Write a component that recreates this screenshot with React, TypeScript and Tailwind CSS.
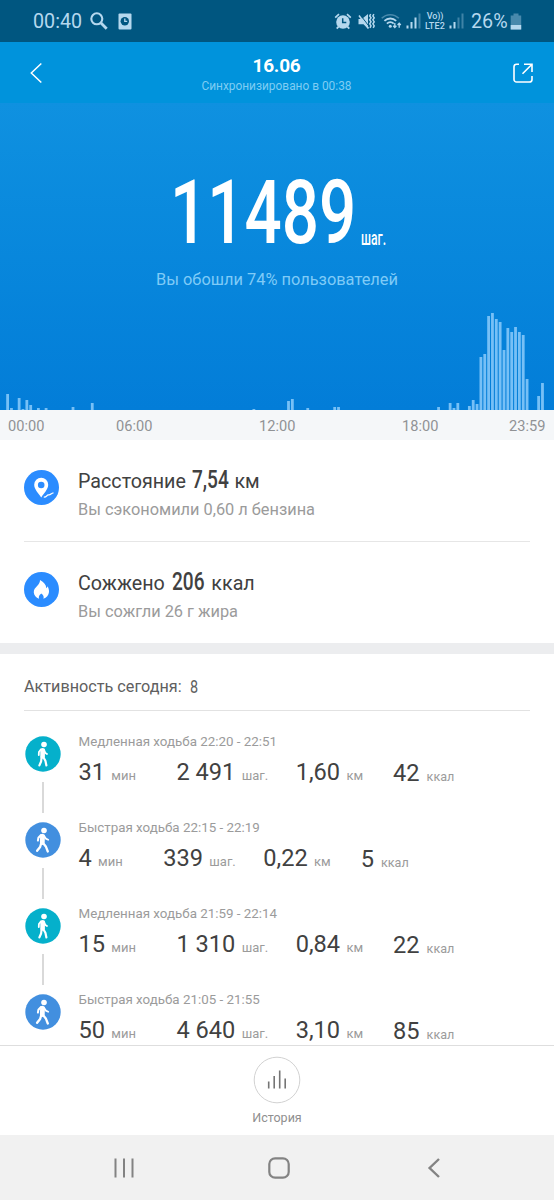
import React from "react";

const bars: [number, number][] = [
  [0, 16], [1, 2], [3, 12], [4, 1], [5, 10], [6, 5], [8, 2], [10, 2], [17, 3], [22, 7],
  [64, 1], [73, 9], [74, 11], [78, 2], [85, 3], [86, 3], [112, 3], [115, 7], [116, 2],
  [117, 7], [120, 4], [121, 10], [122, 6], [123, 53], [124, 56], [125, 94], [126, 97],
  [127, 91], [128, 88], [129, 60], [130, 82], [131, 78], [132, 83], [133, 78], [134, 75],
  [135, 31], [138, 14], [139, 27],
];

type Activity = {
  fast: boolean;
  label: string;
  values: [string, string, string, string];
};

const activities: Activity[] = [
  { fast: false, label: "Медленная ходьба 22:20 - 22:51", values: ["31", "2 491", "1,60", "42"] },
  { fast: true, label: "Быстрая ходьба 22:15 - 22:19", values: ["4", "339", "0,22", "5"] },
  { fast: false, label: "Медленная ходьба 21:59 - 22:14", values: ["15", "1 310", "0,84", "22"] },
  { fast: true, label: "Быстрая ходьба 21:05 - 21:55", values: ["50", "4 640", "3,10", "85"] },
];

function Signal({ lit }: { lit: number }) {
  return (
    <svg width="15" height="16" viewBox="0 0 15 16" className="block">
      {[3, 6.5, 11, 15].map((h, i) => (
        <rect key={i} x={0.5 + i * 4} y={15.5 - h} width="2" height={h} fill="#b5d8ee" opacity={i < lit ? 1 : 0.35} />
      ))}
    </svg>
  );
}

function StatusBar() {
  return (
    <div className="flex h-[42px] items-center bg-[#005680] pl-[33px] pr-[32px] text-[#b5d8ee]">
      <span className="w-[50px] whitespace-nowrap pt-[2px] text-[19.7px] leading-6">00:40</span>
      <svg className="ml-[7px]" width="18" height="18" viewBox="0 0 18 18" fill="none" stroke="currentColor">
        <circle cx="6.8" cy="6.8" r="5.5" strokeWidth="2.1" />
        <path d="M11 11l5.7 5.7" strokeWidth="2.8" />
      </svg>
      <svg className="ml-[10px]" width="14" height="17" viewBox="0 0 14 17">
        <rect x="0.5" y="0.5" width="13" height="16" rx="1" fill="currentColor" />
        <circle cx="6.8" cy="8.3" r="4.2" fill="#005680" />
        <path d="M6.8 5.4v3h2.4" fill="none" stroke="currentColor" strokeWidth="1.3" />
      </svg>
      <div className="flex-1" />
      <svg width="18" height="17" viewBox="0 0 18 17" fill="none" stroke="currentColor">
        <circle cx="9" cy="9" r="6.8" fill="currentColor" stroke="none" />
        <path d="M1.2 4.7L5 1.2M13 1.2l3.8 3.5" strokeWidth="1.7" />
        <path d="M4.6 13.6l-1.900 2M13.400 13.600l1.900 2" strokeWidth="1.8" />
        <path d="M8.7 5.2v4.300h3.600" stroke="#005680" strokeWidth="1.5" />
      </svg>
      <svg className="ml-[6px]" width="17" height="17" viewBox="0 0 17 17">
        <path d="M0.5 6h3.300L10 1v14.800L5.500 11.300h-5z" fill="currentColor" />
        <path d="M1.800 1.200l9.500 12.500" stroke="#005680" strokeWidth="1" />
        <path d="M1 2.500l9.500 13" stroke="currentColor" strokeWidth="1.600" />
        <path d="M12.700 1.200l-1 1.700 1.300 1.900-1.300 2 1.300 2-1.300 2 1.300 2-1 2M15.900 1.200l-1 1.700 1.300 1.900-1.300 2 1.300 2-1.300 2 1.300 2-1 2" fill="none" stroke="currentColor" strokeWidth="1.500" />
      </svg>
      <svg className="ml-[6px]" width="21" height="17" viewBox="0 0 21 17" fill="none" stroke="currentColor">
        <path d="M0.7 5.300C5.500 0.500 13 0.500 17.800 5.300" strokeWidth="1.6" opacity="0.4" />
        <path d="M3.400 7.900c3.400-3.200 8.400-3.200 11.800 0" strokeWidth="1.800" />
        <path d="M5.900 10.600c2-1.900 4.900-1.900 6.800 0" strokeWidth="1.800" />
        <circle cx="9.300" cy="13.200" r="1.500" fill="currentColor" stroke="none" />
        <path d="M13.800 10v4.500M12.200 12.800l1.600 1.800 1.600-1.800M18.200 14.800v-4.500M16.600 12l1.600-1.800 1.600 1.800" strokeWidth="1.300" />
      </svg>
      <div className="ml-[4px] pb-[1px]"><Signal lit={3} /></div>
      <div className="ml-[3px] w-[22px] text-center text-[9px] font-medium leading-[10px]">
        <div className="tracking-[-0.1px]">Vo))</div>
        <div className="tracking-[0.2px]">LTE2</div>
      </div>
      <div className="ml-[3px] pb-[1px]"><Signal lit={2} /></div>
      <span className="ml-[7px] w-[37px] whitespace-nowrap pt-[2px] text-[19.7px] leading-6">26%</span>
      <svg className="ml-[2px]" width="12" height="17" viewBox="0 0 12 17">
        <path d="M3.500 0.500h5v2h2.700v14H0.700v-14h2.800z" fill="currentColor" opacity="0.4" />
        <rect x="0.7" y="12" width="10.500" height="4.500" fill="currentColor" />
      </svg>
    </div>
  );
}

function Header() {
  return (
    <div className="flex h-[61px] items-start justify-between bg-[#0093dc] text-white">
      <svg className="ml-[28px] mt-[20px]" width="16" height="22" viewBox="0 0 16 22" fill="none" stroke="currentColor" strokeWidth="1.5">
        <path d="M13.3 1.5L3.3 11l10 9.5" />
      </svg>
      <div className="w-[160px] pr-[3px] pt-[12px] text-center">
        <div className="text-[19px] font-bold leading-6 tracking-[-0.2px]">16.06</div>
        <div className="whitespace-nowrap text-[11.9px] leading-4 text-[#7fcdf3]">Синхронизировано в 00:38</div>
      </div>
      <svg className="mr-[20px] mt-[20px]" width="22" height="22" viewBox="0 0 22 22" fill="none" stroke="currentColor" strokeWidth="1.6">
        <path d="M7 2.200H4.600a2.600 2.600 0 0 0-2.600 2.600v12.600A2.600 2.600 0 0 0 4.600 20h12.800a2.600 2.600 0 0 0 2.600-2.600V14" />
        <path d="M12 2.200H20V10M20 2.200L10.500 11.700" />
      </svg>
    </div>
  );
}

function Hero() {
  return (
    <div className="flex h-[307px] flex-col bg-linear-to-b from-[#0f91e0] to-[#037dd8] pt-[65px] text-white">
      <div className="flex h-[90px] pl-[170px]">
        <div className="w-[191px]">
          <span className="inline-block origin-left scale-x-[0.74] text-[88.5px] font-medium leading-[90px]">11489</span>
        </div>
        <span className="inline-block origin-left scale-x-[0.61] pt-[60px] text-[20px] font-medium leading-[20px]">шаг.</span>
      </div>
      <div className="mt-[12px] text-center text-[16.4px] leading-5 text-[#7fcbf7]">Вы обошли 74% пользователей</div>
      <svg className="mt-auto block" width="554" height="104" viewBox="0 0 554 104">
        {bars.map(([slot, h]) => (
          <rect key={slot} x={6.2 + slot * 3.848} y={104 - h} width="2.8" height={h} fill="#77c0f6" />
        ))}
      </svg>
    </div>
  );
}

function Axis() {
  return (
    <div className="flex h-[30px] bg-[#f5f7f9] pl-[8px] pt-[6px] text-[14.6px] leading-5 text-[#909295]">
      <span className="w-[108px]">00:00</span>
      <span className="w-[143px]">06:00</span>
      <span className="w-[143px]">12:00</span>
      <span className="w-[107px]">18:00</span>
      <span>23:59</span>
    </div>
  );
}

function PinIcon() {
  return (
    <svg width="35" height="35" viewBox="0 0 35 35">
      <circle cx="17.5" cy="17.5" r="17.5" fill="#2b8cff" />
      <path fillRule="evenodd" fill="#fff" d="M17.2 7.8a7 7 0 0 0-7 7c0 4.600 4.200 8.200 7 12.600 2.800-4.400 7-8 7-12.600a7 7 0 0 0-7-7zm0 3.900a3.300 3.300 0 1 1 0 6.600 3.300 3.300 0 0 1 0-6.600z" />
      <path d="M19.800 27.200c3.500.2 2.500-2.700 5-2.400 2 .2 2.200-1.800 4.700-2" fill="none" stroke="#fff" strokeWidth="1.3" />
    </svg>
  );
}

function FlameIcon() {
  return (
    <svg width="35" height="35" viewBox="0 0 35 35">
      <circle cx="17.5" cy="17.5" r="17.5" fill="#2b8cff" />
      <path fill="#fff" d="M16 8c4 2 6.200 5 6.300 8.200.8-.7 1.100-1.300 1.200-2 1 1.600 1.700 3.700 1.500 5.900-.3 3.300-2.400 5.600-5.600 6.700.7-1.900.2-3.700-2.100-5.400-2.300 1.700-2.900 3.500-2.200 5.400-3.100-1.100-5.100-3.300-5.300-6.300-.2-3.300 1.500-4.600 3.300-6.600 1.600-1.700 3-3.300 2.900-5.900z" />
    </svg>
  );
}

function Summary(props: { icon: React.ReactNode; name: string; value: string; box: string; unit: string; note: string; last?: boolean }) {
  return (
    <div className={props.last ? "mx-[24px] flex h-[101px]" : "mx-[24px] flex h-[102px] border-b border-[#e6e6e6]"}>
      <div className="w-[54px] pt-[29.5px]">{props.icon}</div>
      <div className="pt-[27px]">
        <div className="flex h-[30px] text-[19.7px] leading-[30px] text-[#414141]">
          <span>{props.name}</span>
          <span className={props.box}>
            <span className="relative -top-[3px] inline-block origin-left scale-x-[0.72] text-[26.5px] font-medium">{props.value}</span>
          </span>
          <span>{props.unit}</span>
        </div>
        <div className="mt-[3px] text-[16.35px] leading-5 text-[#9b9b9b]">{props.note}</div>
      </div>
    </div>
  );
}

function Walker({ fast }: { fast: boolean }) {
  return (
    <svg width="36" height="36" viewBox="0 0 36 36" className="block">
      <circle cx="18" cy="18" r="17.7" fill={fast ? "#428fdf" : "#05b0cb"} />
      <circle cx="19" cy="8.5" r="2.8" fill="#fff" />
      {fast ? (
        <g fill="none" stroke="#fff" strokeLinecap="round" strokeLinejoin="round">
          <path d="M17.5 14.2L17.3 20.5" strokeWidth="4.8" />
          <path d="M16 13l-2.6 2.8-.5 2.8" strokeWidth="2" />
          <path d="M19 13.8l1.8 2.8 2.4 1.1" strokeWidth="1.8" />
          <path d="M16.3 21l-1.2 4-3 3.8" strokeWidth="2.3" />
          <path d="M18 21l3 3.8 1.8 4.7" strokeWidth="2.3" />
        </g>
      ) : (
        <g fill="none" stroke="#fff" strokeLinecap="round" strokeLinejoin="round">
          <path d="M17.6 14.2v6.3" strokeWidth="4.6" />
          <path d="M16 13.4l-2.1 2.6-.1 3" strokeWidth="1.8" />
          <path d="M19 13.8l1.3 3.1 1.7 1.1" strokeWidth="1.8" />
          <path d="M16.6 21l-.5 4.5-1.7 3.9" strokeWidth="2.2" />
          <path d="M18.2 21l2.2 3.8 1 4.6" strokeWidth="2.2" />
        </g>
      )}
    </svg>
  );
}

function Metric({ value, unit, low }: { value: string; unit: string; low?: boolean }) {
  return (
    <span className={low ? "flex items-baseline pt-[1px]" : "flex items-baseline"}>
      <span className="text-[23.6px] leading-[28px] text-[#414141]">{value}</span>
      <span className={low ? "ml-[7px] text-[12.6px] text-[#9b9b9b]" : "ml-[6.3px] text-[13px] text-[#9b9b9b]"}>{unit}</span>
    </span>
  );
}

function ActivityRow({ item, last }: { item: Activity; last: boolean }) {
  return (
    <div className="flex h-[86px] shrink-0 pl-[25px]">
      <div className="flex w-[53.5px] flex-col">
        <Walker fast={item.fast} />
        {!last && <div className="ml-[17px] mt-[10px] h-[31px] w-[1.5px] bg-[#d9d9d9]" />}
      </div>
      <div className="-mt-[2px]">
        <div className="text-[13.35px] leading-4 text-[#9b9b9b]">{item.label}</div>
        <div className="mt-[8px] flex">
          <Metric value={item.values[0]} unit="мин" />
          <span className="w-[40.5px]" />
          <Metric value={item.values[1]} unit="шаг." />
          <span className="w-[27.5px]" />
          <Metric value={item.values[2]} unit="км" />
          <span className="w-[30px]" />
          <Metric value={item.values[3]} unit="ккал" low />
        </div>
      </div>
    </div>
  );
}

export default function App() {
  return (
    <div className="flex h-[1200px] w-[554px] flex-col overflow-hidden bg-white font-['Roboto',sans-serif]">
      <StatusBar />
      <Header />
      <Hero />
      <Axis />
      <Summary icon={<PinIcon />} name="Расстояние" value="7,54" box="ml-[6.5px] w-[42px]" unit="км" note="Вы сэкономили 0,60 л бензина" />
      <Summary icon={<FlameIcon />} name="Сожжено" value="206" box="ml-[7px] w-[39.5px]" unit="ккал" note="Вы сожгли 26 г жира" last />
      <div className="h-[11px] bg-[#ecedef]" />
      <div className="mx-[24px] flex h-[57px] border-b border-[#e2e2e2] pt-[21px] text-[16.2px] leading-6 text-[#606060]">
        <span>Активность сегодня:</span>
        <span className="ml-[8px] inline-block origin-left scale-x-[0.78] text-[18.5px]">8</span>
      </div>
      <div className="flex h-[334px] flex-col overflow-hidden pt-[25px]">
        {activities.map((a, i) => (
          <ActivityRow key={a.label} item={a} last={i === activities.length - 1} />
        ))}
      </div>
      <div className="flex h-[90px] flex-col items-center border-t border-[#dedede] pt-[10px]">
        <svg width="48" height="48" viewBox="0 0 48 48" fill="none">
          <circle cx="24" cy="24" r="22.8" stroke="#d2d2d2" />
          <path d="M15.7 25.5v7M21.2 20v12.5M26.7 14.5v18M32.2 22.5v10" stroke="#757575" strokeWidth="1.6" />
        </svg>
        <div className="mt-[6px] text-[12.5px] leading-4 text-[#8f8f8f]">История</div>
      </div>
      <div className="flex h-[65px] items-center bg-[#f1f1f1] pl-[113px] text-[#838383]">
        <svg width="22" height="22" viewBox="0 0 22 22" stroke="currentColor" strokeWidth="2">
          <path d="M2.5 1.5v19M11 1.5v19M19.5 1.5v19" />
        </svg>
        <svg className="ml-[132px]" width="24" height="24" viewBox="0 0 24 24" fill="none" stroke="currentColor" strokeWidth="2.2">
          <rect x="2.3" y="2.3" width="19.4" height="19.4" rx="5.8" />
        </svg>
        <svg className="ml-[134px]" width="18" height="22" viewBox="0 0 18 22" fill="none" stroke="currentColor" strokeWidth="2.4">
          <path d="M14 2L4.6 11l9.4 9" />
        </svg>
      </div>
    </div>
  );
}
